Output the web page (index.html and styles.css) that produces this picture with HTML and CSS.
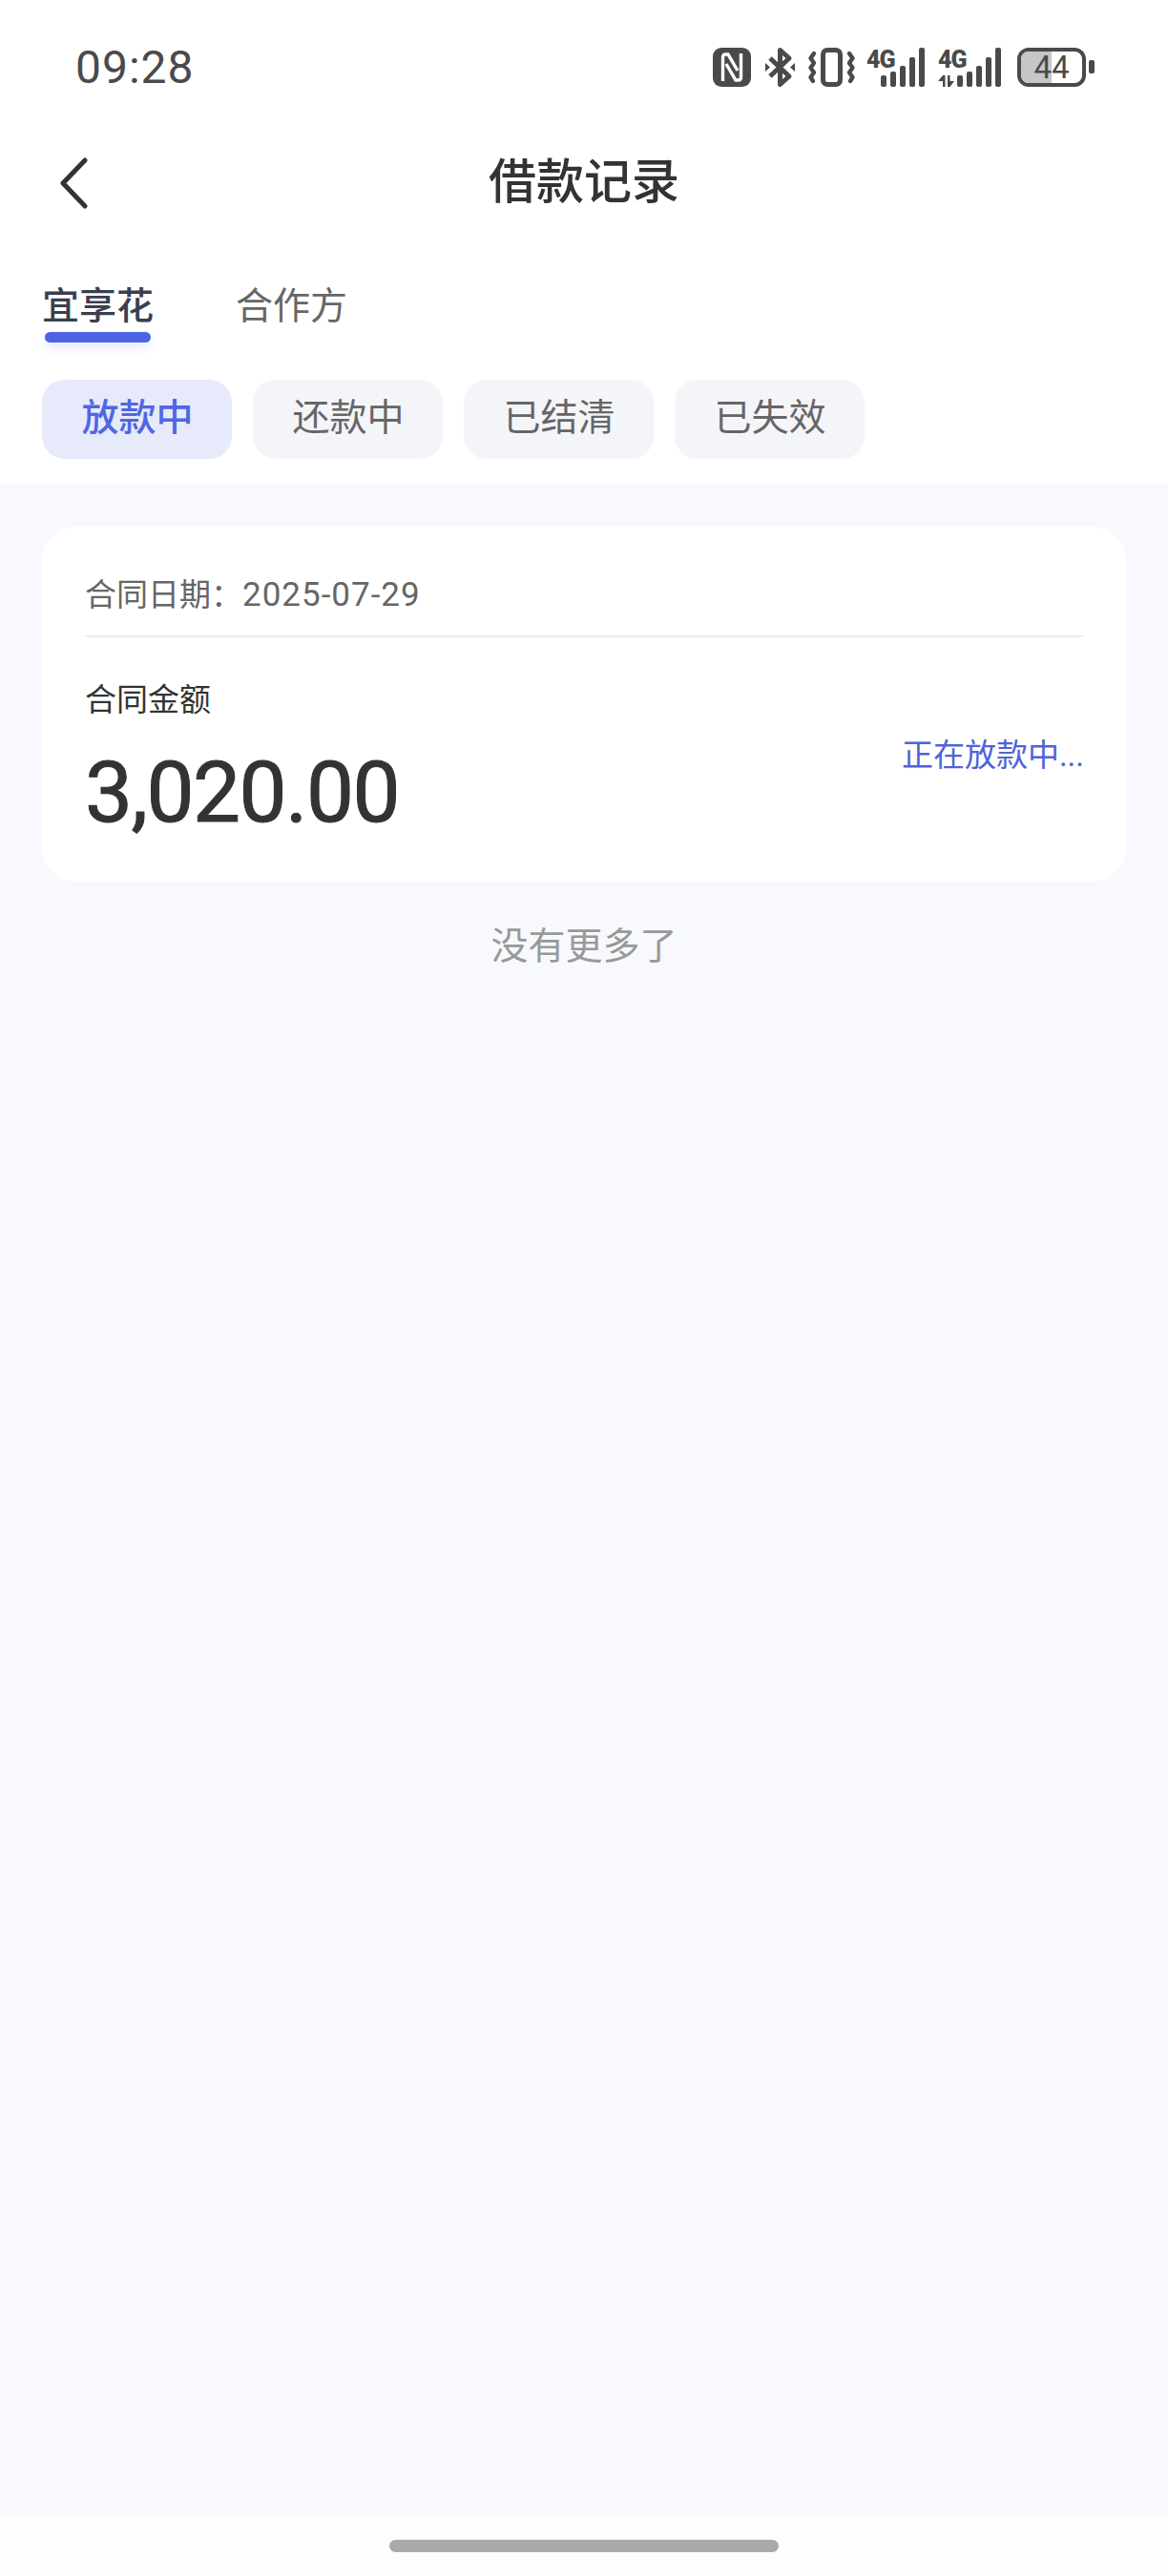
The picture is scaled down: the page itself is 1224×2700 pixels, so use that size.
FILE: index.html
```html
<!DOCTYPE html>
<html lang="zh-CN">
<head>
    <meta charset="UTF-8">
    <meta name="viewport" content="width=device-width, initial-scale=1.0">
    <title>借款记录</title>
    <link rel="stylesheet" href="styles.css">
</head>
<body>

    <div class="page">
        <div class="status-bar">
            <span class="status-time">09:28</span>
            <div class="status-icons">
                <svg class="icon-nfc" width="40" height="41" viewBox="0 0 40 41">
                    <rect x="0" y="0" width="40" height="41" rx="9" fill="#4a4a4a"/>
                    <path d="M10.5 35 V10 Q10.5 7 13.5 7 H16 L26 24" fill="none" stroke="#fff" stroke-width="3.4"/>
                    <path d="M29.5 6 V31 Q29.5 34 26.5 34 H24 L14 17" fill="none" stroke="#fff" stroke-width="3.4"/>
                </svg>
                <svg class="icon-bt" width="31" height="41" viewBox="0 0 31 41">
                    <path d="M5 11 L25 30 L15.5 38.5 V2.5 L25 11 L5 30" fill="none" stroke="#4a4a4a" stroke-width="5" stroke-linejoin="round"/>
                    <path d="M0 16 L5 20.5 L0 25 Z M31 16 L26 20.5 L31 25 Z" fill="#4a4a4a"/>
                </svg>
                <svg class="icon-vibrate" width="49" height="41" viewBox="0 0 49 41">
                    <rect x="15.5" y="2.5" width="18" height="36" rx="4.5" fill="none" stroke="#4a4a4a" stroke-width="5"/>
                    <path d="M6 6 L2.5 11 L6 16 L2.5 21 L6 26 L2.5 31 L5 35" fill="none" stroke="#4a4a4a" stroke-width="4.4" stroke-linecap="round" stroke-linejoin="round"/>
                    <path d="M43 6 L46.5 11 L43 16 L46.5 21 L43 26 L46.5 31 L44 35" fill="none" stroke="#4a4a4a" stroke-width="4.4" stroke-linecap="round" stroke-linejoin="round"/>
                </svg>
                <svg class="icon-signal" width="62" height="41" viewBox="0 0 62 41">
                    <text class="signal-label" x="0" y="21">4G</text>
                    <rect x="15" y="29" width="6" height="12" rx="2" fill="#4a4a4a"/>
                    <rect x="25" y="25" width="6" height="16" rx="2" fill="#4a4a4a"/>
                    <rect x="35" y="19" width="6" height="22" rx="2" fill="#4a4a4a"/>
                    <rect x="45" y="10" width="6" height="31" rx="2" fill="#4a4a4a"/>
                    <rect x="55" y="0" width="6" height="41" rx="2" fill="#4a4a4a"/>
                </svg>
                <svg class="icon-signal" width="67" height="41" viewBox="0 0 67 41">
                    <text class="signal-label" x="1" y="21">4G</text>
                    <path d="M6 29 V41 H8.5 V29 Z M6 29 L1 35 H6 Z M11 29 V41 H13.5 V29 Z M13.5 35 H18 L13.5 41 Z" fill="#4a4a4a"/>
                    <rect x="21" y="29" width="6" height="12" rx="2" fill="#4a4a4a"/>
                    <rect x="31" y="25" width="6" height="16" rx="2" fill="#4a4a4a"/>
                    <rect x="41" y="19" width="6" height="22" rx="2" fill="#4a4a4a"/>
                    <rect x="51" y="10" width="6" height="31" rx="2" fill="#4a4a4a"/>
                    <rect x="61" y="0" width="6" height="41" rx="2" fill="#4a4a4a"/>
                </svg>
                <div class="battery">
                    <div class="battery-body">
                        <div class="battery-fill"></div>
                        <span class="battery-text">44</span>
                    </div>
                    <div class="battery-nub"></div>
                </div>
            </div>
        </div>

        <div class="nav-bar">
            <svg class="back-icon" width="31" height="54" viewBox="0 0 31 54">
                <path d="M27 3 L4 27 L27 51" fill="none" stroke="#333" stroke-width="5" stroke-linecap="round" stroke-linejoin="round"/>
            </svg>
            <h1 class="nav-title">借款记录</h1>
        </div>

        <div class="tabs">
            <div class="tab tab-active">
                <span class="tab-text">宜享花</span>
                <span class="tab-line"></span>
            </div>
            <div class="tab">
                <span class="tab-text">合作方</span>
            </div>
        </div>

        <div class="filters">
            <div class="filter filter-active">放款中</div>
            <div class="filter">还款中</div>
            <div class="filter">已结清</div>
            <div class="filter">已失效</div>
        </div>

        <div class="content">
            <div class="record-card">
                <div class="record-date">合同日期：<span class="record-date-value">2025-07-29</span></div>
                <div class="record-body">
                    <div>
                        <div class="record-label">合同金额</div>
                        <div class="record-amount">3,020.00</div>
                    </div>
                    <div class="record-status">正在放款中...</div>
                </div>
            </div>
            <div class="no-more">没有更多了</div>
        </div>

        <div class="home-bar">
            <div class="home-indicator"></div>
        </div>
    </div>

</body>
</html>
```
FILE: styles.css
```css
* {
    box-sizing: border-box;
}

body {
    margin: 0;
    font-family: "Roboto", "Noto Sans CJK SC", sans-serif;
    background-color: #fff;
    color: #333;
}

.page {
    display: flex;
    flex-direction: column;
    width: 1224px;
    height: 2700px;
}

/* Status bar */
.status-bar {
    display: flex;
    justify-content: space-between;
    align-items: center;
    height: 140px;
    padding: 0 77px 0 79px;
}

.status-time {
    font-size: 48px;
    letter-spacing: 1px;
    color: #4a4a4a;
}

.status-icons {
    display: flex;
    align-items: center;
}

.status-icons svg {
    overflow: visible;
}

.icon-bt {
    margin-left: 15px;
}

.icon-vibrate {
    margin-left: 14px;
}

.icon-signal {
    margin-left: 12px;
}

.signal-label {
    font-family: "Roboto", sans-serif;
    font-size: 25px;
    font-weight: 900;
    letter-spacing: -1px;
    fill: #4a4a4a;
}

.battery {
    display: flex;
    align-items: center;
    margin-left: 17px;
}

.battery-body {
    position: relative;
    width: 72px;
    height: 41px;
    border: 4px solid #4a4a4a;
    border-radius: 12px;
    overflow: hidden;
}

.battery-fill {
    width: 32px;
    height: 100%;
    background-color: #c6c6c6;
}

.battery-text {
    position: absolute;
    top: 0;
    left: 0;
    width: 100%;
    font-size: 33px;
    line-height: 33px;
    text-align: center;
    color: #4a4a4a;
}

.battery-nub {
    width: 6px;
    height: 14px;
    margin-left: 3px;
    border-radius: 2px;
    background-color: #4a4a4a;
}

/* Title */
.nav-bar {
    position: relative;
    display: flex;
    justify-content: center;
    height: 104px;
}

.back-icon {
    position: absolute;
    left: 62px;
    top: 25px;
}

.nav-title {
    margin: 23px 0 0;
    font-size: 50px;
    font-weight: 500;
    line-height: 56px;
    color: #333;
}

/* Tabs */
.tabs {
    display: flex;
    gap: 86px;
    margin-top: 50px;
    padding-left: 44px;
    height: 65px;
}

.tab {
    display: flex;
    flex-direction: column;
    align-items: center;
}

.tab-text {
    font-size: 39px;
    line-height: 54px;
    color: #666;
}

.tab-active .tab-text {
    font-weight: 500;
    color: #3a3f4e;
}

.tab-line {
    width: 111px;
    height: 11px;
    border-radius: 6px;
    background-color: #4c63e6;
    box-shadow: 0 6px 10px rgba(76, 99, 230, 0.12);
}

/* Filters */
.filters {
    display: flex;
    gap: 22px;
    margin-top: 39px;
    padding: 0 44px 27px;
}

.filter {
    width: 199px;
    height: 83px;
    padding-left: 1px;
    border-radius: 24px;
    background-color: #f4f5f9;
    font-size: 39px;
    line-height: 80px;
    text-align: center;
    color: #666;
}

.filter-active {
    background-color: #e6eafa;
    font-weight: 500;
    color: #4f66e4;
}

/* Content */
.content {
    flex: 1;
    padding: 44px 44px 0;
    background-color: #f8f9fe;
}

.record-card {
    height: 372px;
    padding: 0 44px 0 45px;
    border-radius: 36px;
    background-color: #fff;
}

.record-date {
    height: 116px;
    padding-top: 48px;
    border-bottom: 2px solid #ececec;
    font-size: 33px;
    line-height: 48px;
    color: #666;
}

.record-date-value {
    font-size: 35px;
    letter-spacing: 1px;
}

.record-body {
    display: flex;
    justify-content: space-between;
    align-items: flex-start;
    padding-top: 47px;
}

.record-label {
    font-size: 33px;
    line-height: 38px;
    color: #333;
}

.record-amount {
    margin-top: 30px;
    font-size: 89px;
    font-weight: 400;
    -webkit-text-stroke: 1px #333;
    letter-spacing: -1.5px;
    line-height: 96px;
    color: #333;
}

.record-status {
    margin-top: 53px;
    font-size: 33px;
    line-height: 48px;
    color: #4f63d8;
}

.no-more {
    margin-top: 40px;
    font-size: 39px;
    line-height: 56px;
    text-align: center;
    color: #999;
}

/* Bottom gesture bar */
.home-bar {
    display: flex;
    justify-content: center;
    height: 62px;
    padding-top: 24px;
    background-color: #fdfdfd;
}

.home-indicator {
    width: 408px;
    height: 13px;
    border-radius: 7px;
    background-color: #aaa;
}
```
